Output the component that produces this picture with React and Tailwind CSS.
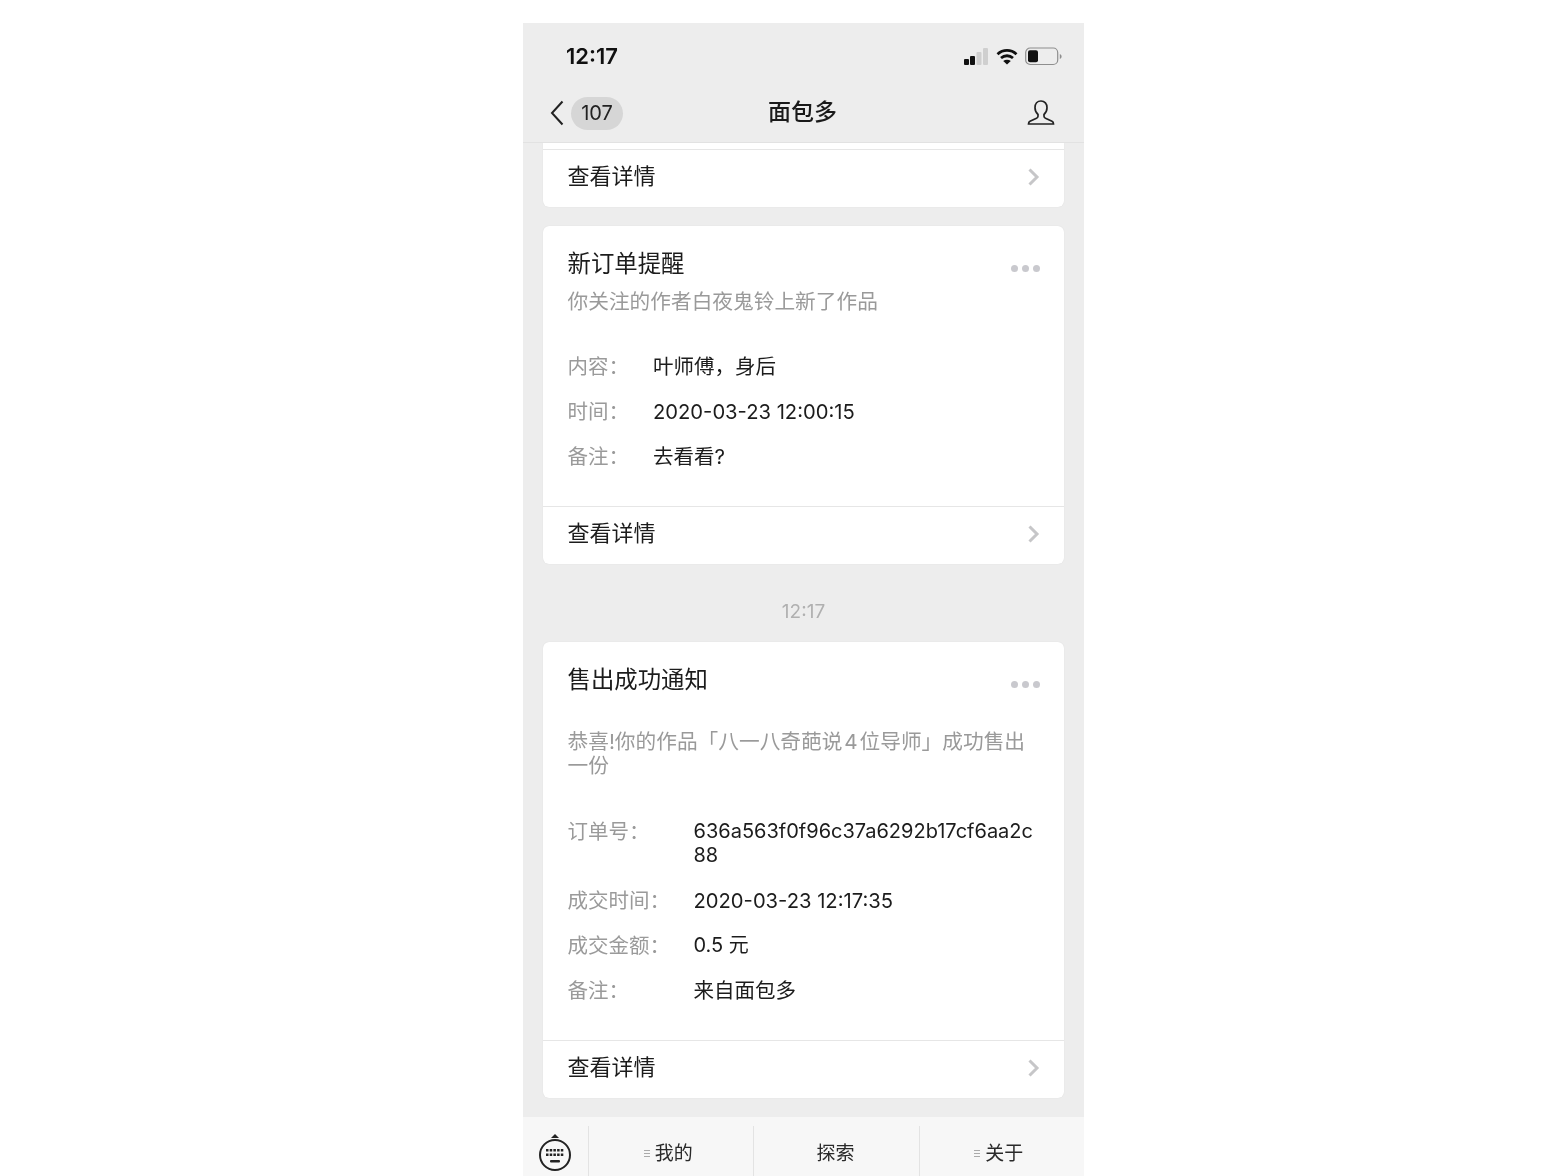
import React from 'react';

const cjk = { fontFamily: 'Inter, "Noto Sans CJK SC", sans-serif' };

function Chevron() {
  return (
    <svg width="13" height="20" viewBox="0 0 13 20" fill="none" stroke="#c6c6c8" strokeWidth="3">
      <path d="M2.5 2.5 10 10 2.5 17.5" />
    </svg>
  );
}

function StatusIcons() {
  return (
    <div className="flex items-center gap-[6px]">
      <svg width="26" height="18" viewBox="0 0 26 18" fill="#111">
        <rect x="0" y="11" width="5" height="6" rx="1" />
        <rect x="6" y="8" width="5" height="9" rx="1" />
        <rect x="12.500" y="4" width="5" height="13" rx="1" fill="#cfcfcf" />
        <rect x="19" y="0" width="5" height="17" rx="1" fill="#cfcfcf" />
      </svg>
      <svg width="22" height="17" viewBox="0 0 22 17" fill="none" stroke="#111" strokeWidth="2.800">
        <path d="M1.500 6.200C7 1.200 15 1.200 20.500 6.200" />
        <path d="M5 10c3.500-3 8.500-3 12 0" />
        <path d="M11 16.500l-3.800-3.600c2.200-1.600 5.400-1.600 7.600 0z" fill="#111" stroke="none" />
      </svg>
      <svg width="37" height="19" viewBox="0 0 37 19" fill="none" className="ml-[1px]">
        <rect x="0.700" y="1" width="32" height="16.500" rx="4.500" stroke="#8e8e8e" strokeWidth="1.200" />
        <rect x="3" y="3.200" width="10" height="12" rx="2" fill="#111" />
        <path d="M34.800 7v5c1.200-.4 1.800-1.400 1.800-2.500S36 7.400 34.800 7z" fill="#8e8e8e" />
      </svg>
    </div>
  );
}

function Header() {
  return (
    <div className="bg-[#ededed] border-b border-[#e2e2e2] h-[120px] shrink-0">
      <div className="h-[62px] pl-[43px] pr-[22px] pt-[17px] flex justify-between items-start">
        <span className="text-[22px] leading-[32px] font-semibold text-[#111]">12:17</span>
        <div className="pt-[7px]"><StatusIcons /></div>
      </div>
      <div className="h-[56px] relative flex items-center justify-between pl-[27px] pr-[29px]">
        <div className="flex items-center gap-[7px]">
          <svg width="14" height="26" viewBox="0 0 14 26" fill="none" stroke="#222" strokeWidth="2">
            <path d="M12.500 1.500 2 13l10.500 11.500" />
          </svg>
          <span className="h-[33px] w-[52px] rounded-full bg-[#d6d6d6] text-[#222] text-[20px] flex items-center justify-center">107</span>
        </div>
        <span className="absolute left-0 right-[2px] top-[10px] text-center text-[23px] font-medium text-[#1a1a1a]">面包多</span>
        <svg width="28" height="28" viewBox="0 0 28 28" fill="none" stroke="#222" strokeWidth="1.700">
          <path d="M14 2c-3.700 0-6 2.900-6 6.700 0 2.800 1.200 5.200 3 6.800v1.800c0 1-.5 1.500-1.500 2l-6.500 3c-1 .5-1.500 1.200-1.500 2.700h25c0-1.500-.5-2.200-1.500-2.700l-6.500-3c-1-.5-1.500-1-1.500-2v-1.800c1.800-1.600 3-4 3-6.800C20 4.900 17.700 2 14 2z" />
        </svg>
      </div>
    </div>
  );
}

function CardFoot() {
  return (
    <div className="h-[58px] border-t border-[#e6e6e6] pl-[24.500px] pr-[24px] pb-[4px] flex items-center justify-between">
      <span className="text-[22px] text-[#1c1c1c]">查看详情</span>
      <Chevron />
    </div>
  );
}

function Dots() {
  return (
    <div className="flex gap-[4px] mt-[16px]">
      <span className="w-[7px] h-[7px] rounded-full bg-[#c9c9ce]" />
      <span className="w-[7px] h-[7px] rounded-full bg-[#c9c9ce]" />
      <span className="w-[7px] h-[7px] rounded-full bg-[#c9c9ce]" />
    </div>
  );
}

function Card({ title, sub, rows, labelClass, subClass, rowsClass }) {
  return (
    <div className="bg-white rounded-[6px] shadow-[0_0_1px_rgba(0,0,0,0.12)]">
      <div className="pl-[24.500px] pr-[24px] pt-[23px] pb-[38px]">
        <div className="flex justify-between items-start">
          <span className="text-[23.400px] leading-[30px] text-[#1c1c1c]">{title}</span>
          <Dots />
        </div>
        <p className={`text-[20.700px] leading-[23.500px] text-[#9a9a9a] ${subClass}`}>{sub}</p>
        <div className={`flex flex-col gap-[21.500px] ${rowsClass}`}>
          {rows.map((r) => (
            <div key={r[0]} className="flex text-[20.500px] leading-[23.500px]">
              <span className={`shrink-0 text-[#9a9a9a] ${labelClass}`}>{r[0]}</span>
              <span className={`text-[#1c1c1c] break-all ${r[2]}`}>{r[1]}</span>
            </div>
          ))}
        </div>
      </div>
      <CardFoot />
    </div>
  );
}

function BottomBar() {
  return (
    <div className="h-[59px] shrink-0 bg-[#f7f7f7] flex pt-[9px]">
      <div className="w-[65px] flex items-start justify-center pt-[8px] pr-[2px]">
        <svg width="36" height="41" viewBox="0 0 36 41" fill="none">
          <path d="M18 0l4 4h-8z" fill="#222" />
          <circle cx="18" cy="21" r="15" stroke="#222" strokeWidth="2" />
          <g fill="#222">
            <rect x="9" y="15" width="2.500" height="2.500" /><rect x="12.700" y="15" width="2.500" height="2.500" /><rect x="16.400" y="15" width="2.500" height="2.500" /><rect x="20.100" y="15" width="2.500" height="2.500" /><rect x="23.800" y="15" width="2.500" height="2.500" />
            <rect x="9" y="19.500" width="2.500" height="2.500" /><rect x="12.700" y="19.500" width="2.500" height="2.500" /><rect x="16.400" y="19.500" width="2.500" height="2.500" /><rect x="20.100" y="19.500" width="2.500" height="2.500" /><rect x="23.800" y="19.500" width="2.500" height="2.500" />
            <rect x="13" y="26" width="10" height="2.500" rx="1" />
          </g>
        </svg>
      </div>
      {[['我的', true], ['探索', false], ['关于', true]].map(([name, menu]) => (
        <div key={name} className="flex-1 border-l border-[#e3e3e3] pt-[13px]">
          <div className={`flex items-start justify-center gap-[5px] text-[19px] leading-[30px] text-[#2a2a2a] ${menu ? 'pr-[6px]' : 'pr-[2px]'}`}>
            {menu && (
              <span className="flex flex-col gap-[2px] mt-[11px]">
                <i className="block w-[6px] h-[1px] bg-[#aaa]" />
                <i className="block w-[6px] h-[1px] bg-[#aaa]" />
                <i className="block w-[6px] h-[1px] bg-[#aaa]" />
              </span>
            )}
            <span>{name}</span>
          </div>
        </div>
      ))}
    </div>
  );
}

export default function App() {
  return (
    <div className="h-[1176px] overflow-hidden bg-white flex pt-[23px] pl-[523px]" style={cjk}>
      <div className="w-[561px] h-[1153px] flex flex-col bg-[#ededed] blur-[0.4px]">
        <Header />
        <div className="flex-1 overflow-hidden px-[20px] flex flex-col">
          <div className="bg-white rounded-b-[6px] shadow-[0_0_1px_rgba(0,0,0,0.12)] pt-[6px] shrink-0">
            <CardFoot />
          </div>
          <div className="mt-[19px] shrink-0">
            <Card
              title="新订单提醒"
              sub="你关注的作者白夜鬼铃上新了作品"
              subClass="mt-[11px]"
              rowsClass="mt-[41px]"
              labelClass="w-[85.500px]"
              rows={[
                ['内容：', '叶师傅，身后', ''],
                ['时间：', '2020-03-23 12:00:15', 'text-[20.200px]'],
                ['备注：', '去看看?', ''],
              ]}
            />
          </div>
          <div className="h-[78px] shrink-0 flex items-center justify-center pt-[18px] text-[19px] text-[#b0b0b0]">12:17</div>
          <div className="shrink-0">
            <Card
              title="售出成功通知"
              sub={'恭喜!你的作品「八一八奇葩说\u200a4\u200a位导师」成功售出一份'}
              subClass="mt-[35px]"
              rowsClass="mt-[43px]"
              labelClass="w-[126px]"
              rows={[
                ['订单号：', '636a563f0f96c37a6292b17cf6aa2c88', 'text-[20px]'],
                ['成交时间：', '2020-03-23 12:17:35', 'text-[20.200px]'],
                ['成交金额：', '0.5 元', 'text-[20px]'],
                ['备注：', '来自面包多', ''],
              ]}
            />
          </div>
        </div>
        <BottomBar />
      </div>
    </div>
  );
}
